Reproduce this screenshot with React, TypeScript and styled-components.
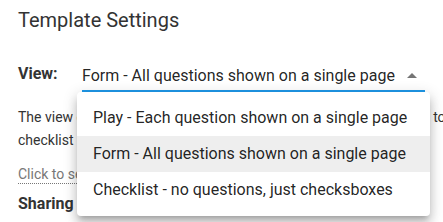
import styled, { createGlobalStyle } from "styled-components";

const GlobalStyle = createGlobalStyle`
  body {
    margin: 0;
    background: #ffffff;
    font-family: Roboto, "Liberation Sans", Arial, sans-serif;
    overflow: hidden;
  }
`;

const Page = styled.div`
  min-height: 222px;
  box-sizing: border-box;
  padding: 8px 18px 0;
  color: #333333;
`;

const Title = styled.h2`
  margin: 0;
  font-size: 20px;
  line-height: 24px;
  font-weight: 400;
  color: #333333;
`;

const ViewRow = styled.div`
  display: flex;
  align-items: flex-end;
  margin-top: 28px;
`;

const Label = styled.span`
  width: 64px;
  font-size: 16px;
  font-weight: 700;
  line-height: 24px;
  padding-bottom: 6px;
  color: #333333;
`;

const SelectBox = styled.div`
  position: relative;
  width: 343px;
  height: 32px;
  box-sizing: border-box;
  padding-top: 4px;
  border-bottom: 2px solid #1f98e8;
  display: flex;
  justify-content: space-between;
`;

const SelectValue = styled.span`
  font-size: 16px;
  line-height: 24px;
  color: rgba(0, 0, 0, 0.87);
  white-space: nowrap;
`;

const Arrow = styled.svg`
  margin: 9px 8px 0 0;
`;

const Menu = styled.ul`
  position: absolute;
  top: 32px;
  left: -5px;
  width: 353px;
  margin: 0;
  padding: 8px 0;
  list-style: none;
  background: #ffffff;
  border-radius: 4px;
  box-shadow: 0 5px 5px -3px rgba(0, 0, 0, 0.2),
    0 8px 10px 1px rgba(0, 0, 0, 0.14), 0 3px 14px 2px rgba(0, 0, 0, 0.12);
  z-index: 10;
`;

const MenuItem = styled.li<{ $selected?: boolean }>`
  height: 36px;
  line-height: 36px;
  padding: 0 16px;
  font-size: 16px;
  color: rgba(0, 0, 0, 0.87);
  white-space: nowrap;
  background: ${(p) => (p.$selected ? "#eeeeee" : "transparent")};
`;

const Paragraph = styled.p`
  margin: 14px 0 0;
  font-size: 14px;
  line-height: 23px;
  color: #333333;
  white-space: nowrap;
`;

const HelpLine = styled.div`
  margin-top: 12px;
  font-size: 14px;
  line-height: 20px;
`;

const HelpLink = styled.span`
  color: #777777;
  border-bottom: 1px dotted #777777;
  padding-bottom: 1px;
`;

const Section = styled.div`
  margin-top: 10px;
  font-size: 16px;
  font-weight: 700;
  line-height: 20px;
  color: #333333;
`;

const options = [
  "Play - Each question shown on a single page",
  "Form - All questions shown on a single page",
  "Checklist - no questions, just checksboxes",
];

function App() {
  const selected = 1;
  return (
    <>
      <GlobalStyle />
      <Page>
        <Title>Template Settings</Title>
        <ViewRow>
          <Label>View:</Label>
          <SelectBox>
            <SelectValue>{options[selected]}</SelectValue>
            <Arrow width="10" height="5" viewBox="0 0 10 5">
              <path d="M0 5 L5 0 L10 5 Z" fill="rgba(0,0,0,0.54)" />
            </Arrow>
            <Menu>
              {options.map((o, i) => (
                <MenuItem key={o} $selected={i === selected}>
                  {o}
                </MenuItem>
              ))}
            </Menu>
          </SelectBox>
        </ViewRow>
        <Paragraph>
          The view changes how the template is shown to the people it goes to
          <br />
          checklist users only see the checkboxes.
        </Paragraph>
        <HelpLine>
          <HelpLink>Click to see an example of each view</HelpLink>
        </HelpLine>
        <Section>Sharing</Section>
      </Page>
    </>
  );
}

export default App;
